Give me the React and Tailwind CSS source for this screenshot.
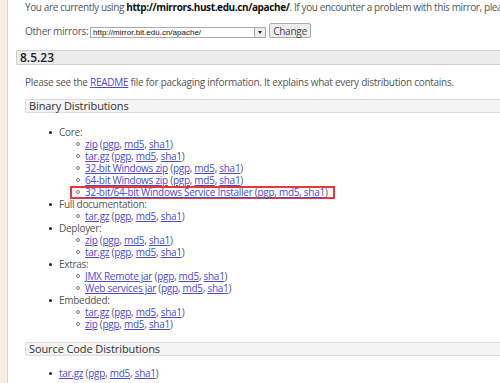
import React from "react";

const L = ({ children }) => (
  <a className="text-[#4b4bd8] underline" href="#">{children}</a>
);

const Sums = () => (
  <span>
    {" "}(<L>pgp</L>, <L>md5</L>, <L>sha1</L>)
  </span>
);

const Sub = ({ name, boxed }) => (
  <div className="flex h-[12px] items-center">
    <div className={boxed ? "flex h-[13px] items-center border-2 border-[#e8383d] pl-[4px] pr-[5px] -ml-[6px]" : "flex items-center"}>
      <span className="mr-[5px] inline-block h-[4px] w-[4px] rounded-full border border-[#777]"></span>
      <span><L>{name}</L><Sums /></span>
    </div>
  </div>
);

const Top = ({ label }) => (
  <div className="flex h-[12px] items-center">
    <span className="mr-[7px] inline-block h-[3px] w-[3px] rounded-full bg-[#222]"></span>
    <span>{label}</span>
  </div>
);

const Group = ({ label, items }) => (
  <div>
    <Top label={label} />
    <div className="pl-[27px]">
      {items.map((it, i) => (
        <Sub key={i} name={it.n} boxed={it.b} />
      ))}
    </div>
  </div>
);

export default function App() {
  return (
    <div
      className="flex h-[383px] w-[500px] overflow-hidden bg-white text-[10px] leading-[12px] tracking-[-0.28px] text-[#555]"
      style={{ fontFamily: '"Open Sans", sans-serif' }}
    >
      <div className="w-[8px] shrink-0 border-r border-[#d8d3cc] bg-[#f6eee2]"></div>
      <div className="min-w-0 flex-1">
        <div className="whitespace-nowrap pl-[17px] pt-[1px] leading-[12px] tracking-[-0.38px]">
          You are currently using <b className="font-bold text-[#111]">http://mirrors.hust.edu.cn/apache/</b>. If you encounter a problem with this mirror, please select another mirror.
        </div>
        <div className="mt-[10px] flex items-end pl-[17px]">
          <span className="mb-[1px] w-[65px] shrink-0">Other mirrors:</span>
          <div className="flex h-[11px] w-[176px] items-center justify-between border border-[#aaa] bg-white tracking-normal">
            <span className="pl-[2px] text-[8px] text-[#111]" style={{ fontFamily: '"Liberation Sans", Arial, sans-serif' }}>http://mirror.bit.edu.cn/apache/</span>
            <span className="flex h-[9px] w-[11px] items-center justify-center border-l border-[#aaa] bg-[#eee]">
              <span className="h-0 w-0 border-x-[2.5px] border-t-[3px] border-x-transparent border-t-[#222]"></span>
            </span>
          </div>
          <button className="ml-[3px] flex h-[15px] w-[42px] items-center justify-center rounded-[2px] border border-[#aaa] bg-[#eee] text-[10px] text-[#444]">Change</button>
        </div>
        <div className="mt-[12px] ml-[8px] flex h-[15px] items-center rounded-l-[2px] border border-r-0 border-[#cfcfcf] bg-[#ececec] pl-[3px] text-[12px] font-semibold tracking-normal text-[#222]">
          8.5.23
        </div>
        <div className="mt-[11px] pl-[17px]">
          Please see the <L>README</L> file for packaging information. It explains what every distribution contains.
        </div>
        <div className="mt-[11px] ml-[17px] flex h-[14px] items-center rounded-l-[2px] border border-r-0 border-[#dcdcdc] bg-[#f4f4f4] pl-[3px] text-[11px] tracking-[-0.1px] text-[#333]">
          Binary Distributions
        </div>
        <div className="mt-[13px] pl-[41px]">
          <Group
            label="Core:"
            items={[
              { n: "zip" },
              { n: "tar.gz" },
              { n: "32-bit Windows zip" },
              { n: "64-bit Windows zip" },
              { n: "32-bit/64-bit Windows Service Installer", b: true },
            ]}
          />
          <Group label="Full documentation:" items={[{ n: "tar.gz" }]} />
          <Group label="Deployer:" items={[{ n: "zip" }, { n: "tar.gz" }]} />
          <Group label="Extras:" items={[{ n: "JMX Remote jar" }, { n: "Web services jar" }]} />
          <Group label="Embedded:" items={[{ n: "tar.gz" }, { n: "zip" }]} />
        </div>
        <div className="mt-[12px] ml-[17px] flex h-[14px] items-center rounded-l-[2px] border border-r-0 border-[#dcdcdc] bg-[#f4f4f4] pl-[3px] text-[11px] tracking-[-0.1px] text-[#333]">
          Source Code Distributions
        </div>
        <div className="mt-[11px] pl-[41px]">
          <div className="flex h-[12px] items-center">
            <span className="mr-[7px] inline-block h-[3px] w-[3px] rounded-full bg-[#222]"></span>
            <span><L>tar.gz</L><Sums /></span>
          </div>
        </div>
      </div>
    </div>
  );
}
